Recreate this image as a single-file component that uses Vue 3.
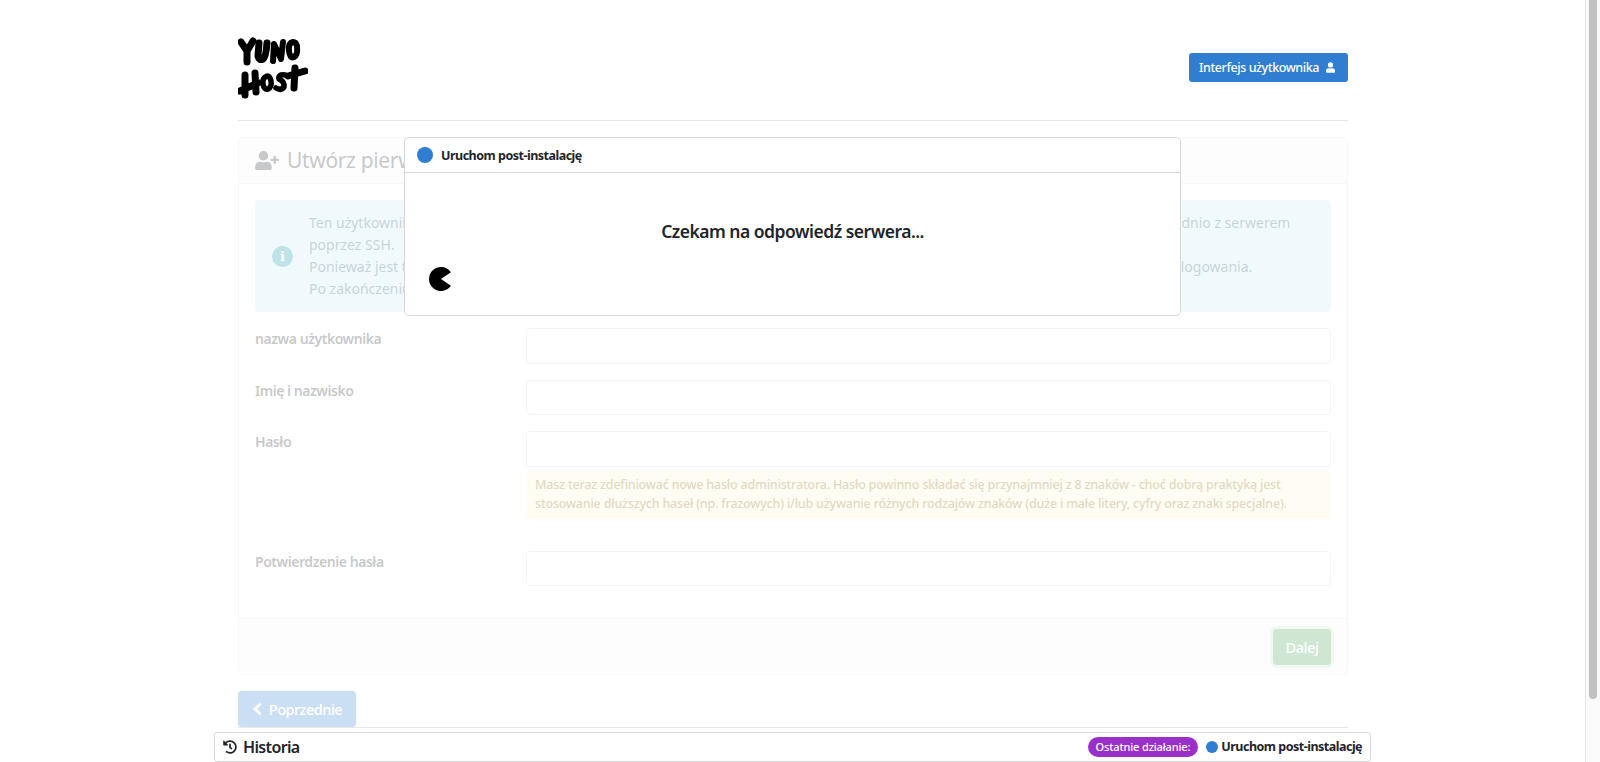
<script setup>
const hint = 'Masz teraz zdefiniować nowe hasło administratora. Hasło powinno składać się przynajmniej z 8 znaków - choć dobrą praktyką jest stosowanie dłuższych haseł (np. frazowych) i/lub używanie różnych rodzajów znaków (duże i małe litery, cyfry oraz znaki specjalne).'
</script>

<template>
  <div class="page">
    <div class="main">
      <header class="top">
        <svg class="logo" viewBox="0 0 70 62" fill="none" stroke="#000" stroke-width="7" stroke-linecap="round" stroke-linejoin="round">
          <path d="M3 5 L9 14 L15 4 M9 14 L9 25" />
          <path d="M21 6 L20 19 Q21 24 25 22 Q28 20 29 6" />
          <path d="M35 24 L36 7 L43 22 L45 5" stroke-width="6" />
          <path d="M55 5 Q50 6 51 14 Q52 22 56 20 Q60 18 59 9 Q58 5 55 5 Z" stroke-width="6" />
          <path d="M7 38 L7 58 M2 54 L20 46 M17 36 L18 55" />
          <path d="M29 39 Q24 41 25 47 Q26 53 30 52 Q34 50 33 44 Q32 39 29 39 Z" stroke-width="5.500" />
          <path d="M47 38 Q40 37 41 42 Q47 45 46 50 Q43 54 38 51" stroke-width="5.500" />
          <path d="M57 31 L56 51 M50 39 L67 34" />
        </svg>
        <a class="btn user-btn">Interfejs użytkownika
          <svg class="user-ico" viewBox="0 0 448 512" fill="#fff"><path d="M224 256a128 128 0 1 0 0-256 128 128 0 0 0 0 256zm89.6 32h-16.7a174 174 0 0 1-145.8 0h-16.7A134.4 134.4 0 0 0 0 422.4V464a48 48 0 0 0 48 48h352a48 48 0 0 0 48-48v-41.6A134.4 134.4 0 0 0 313.6 288z"/></svg>
        </a>
      </header>
      <hr class="rule" />

      <section class="card">
        <div class="card-head">
          <svg class="add-ico" viewBox="0 0 640 512" fill="#212529"><path d="M624 208h-64v-64c0-8.800-7.200-16-16-16h-32c-8.800 0-16 7.200-16 16v64h-64c-8.800 0-16 7.200-16 16v32c0 8.800 7.200 16 16 16h64v64c0 8.800 7.200 16 16 16h32c8.800 0 16-7.200 16-16v-64h64c8.800 0 16-7.200 16-16v-32c0-8.800-7.200-16-16-16zm-400 48a128 128 0 1 0 0-256 128 128 0 0 0 0 256zm89.600 32h-16.700a174 174 0 0 1-145.800 0h-16.700A134.400 134.400 0 0 0 0 422.400V464a48 48 0 0 0 48 48h352a48 48 0 0 0 48-48v-41.600A134.400 134.400 0 0 0 313.600 288z"/></svg>
          <h2>Utwórz pierwszego użytkownika</h2>
        </div>
        <div class="card-body">
          <div class="alert">
            <span class="info-ico">i</span>
            <p>Ten użytkownik otrzymuje uprawnienia administratora całego systemu i będzie mógł łączyć się z panelu webadmina a także bezpośrednio z serwerem<br />poprzez SSH.<br />Ponieważ jest to pierwszy użytkownik w tym nowym systemie, jego dane będą służyć również do pierwszego oraz każdego kolejnego logowania.<br />Po zakończeniu instalacji będzie można dodać kolejnych użytkowników.</p>
          </div>
          <div class="row"><label>nazwa użytkownika</label><div class="field"></div></div>
          <div class="row"><label>Imię i nazwisko</label><div class="field"></div></div>
          <div class="row"><label>Hasło</label>
            <div class="col"><div class="field"></div><div class="hint">{{ hint }}</div></div>
          </div>
          <div class="row last"><label>Potwierdzenie hasła</label><div class="field"></div></div>
        </div>
        <div class="card-foot"><button class="btn next">Dalej</button></div>
      </section>

      <button class="btn prev">
        <svg class="chev" viewBox="0 0 12 16" fill="none" stroke="#fff" stroke-width="3.200"><path d="M9.500 2 L3 8 L9.500 14" /></svg>
        Poprzednie
      </button>
      <hr class="rule end" />

      <div class="veil"></div>

      <div class="modal">
        <div class="modal-head"><span class="dot"></span><strong>Uruchom post-instalację</strong></div>
        <div class="modal-body">
          <h4>Czekam na odpowiedź serwera...</h4>
          <svg class="pac" viewBox="0 0 24 24"><path d="M21.900 5.200 A12 12 0 1 0 21.900 18.800 L12 12 Z" fill="#000" /></svg>
        </div>
      </div>

      <footer class="history">
        <span class="hist-title">
          <svg class="hist-ico" viewBox="0 0 512 512" fill="#212529"><path d="M504 255.500c.3 136.600-111.200 248.400-247.800 248.500a247 247 0 0 1-151.700-51.500c-10.700-8.100-11.700-23.900-2.200-33.400l11.300-11.300c8.100-8.100 21.100-9 30.100-2A183.600 183.600 0 0 0 256 440c101.700 0 184-82.300 184-184 0-101.700-82.300-184-184-184-48.800 0-93.100 19-126 49.900l50.700 50.700c10.100 10.100 2.900 27.300-11.300 27.300H24c-8.800 0-16-7.200-16-16V38.600c0-14.300 17.200-21.400 27.300-11.300l49.400 49.400A247.100 247.100 0 0 1 256 8c136.700 0 247.800 111 248 247.500zm-180.900 78.800 9.800-12.600c8.100-10.500 6.300-25.500-4.200-33.700L288 256.300V152c0-13.300-10.700-24-24-24h-16c-13.300 0-24 10.700-24 24v135.700l65.400 50.900c10.500 8.100 25.500 6.300 33.700-4.300z"/></svg>
          Historia
        </span>
        <span class="last-op">
          <span class="badge">Ostatnie działanie:</span>
          <span class="dot small"></span>
          <strong>Uruchom post-instalację</strong>
        </span>
      </footer>
    </div>
    <div class="rail"><div class="thumb"></div></div>
  </div>
</template>

<style>
html, body { margin: 0; height: 100%; overflow: hidden; background: #fff; }
</style>

<style scoped>
.page {
  display: flex;
  height: 762px;
  overflow: hidden;
  font-family: "Noto Sans", "Open Sans", sans-serif;
  color: #212529;
}
.main {
  position: relative;
  flex: 1;
  height: 762px;
  padding: 0 237px 0 238px;
  box-sizing: border-box;
  overflow: hidden;
}
.rail {
  width: 15px;
  box-sizing: border-box;
  border-left: 1px solid #e8e8e8;
  padding: 0 3px 0 3px;
  background: #fafafa;
}
.thumb { height: 699px; background: #c1c1c1; border-radius: 0 0 4px 4px; }

.top {
  height: 120px;
  display: flex;
  align-items: flex-start;
  justify-content: space-between;
  box-sizing: border-box;
}
.logo { width: 70px; height: 62px; margin-top: 37px; }
.btn { border: 0; color: #fff; font-family: inherit; box-sizing: border-box; }
.user-btn {
  margin-top: 53px;
  width: 159px;
  height: 29px;
  background: #2f7ed2;
  border-radius: 3px;
  font-size: 12.500px;
  font-weight: 500;
  letter-spacing: -.42px;
  display: flex;
  align-items: center;
  padding-left: 10px;
  white-space: nowrap;
}
.user-ico { width: 9px; height: 11px; margin-left: 7px; }
.rule { margin: 0; border: 0; border-top: 1px solid #e4e7ea; height: 0; }

.card {
  margin-top: 16px;
  border: 1px solid #dfdfdf;
  border-radius: 5px;
}
.card-head {
  height: 46px;
  box-sizing: border-box;
  background: #f7f7f7;
  border-bottom: 1px solid #dfdfdf;
  display: flex;
  align-items: center;
  padding-left: 16px;
  border-radius: 5px 5px 0 0;
}
.add-ico { width: 24px; height: 19px; margin-right: 8px; }
h2 { margin: 0; font-size: 21px; font-weight: 400; line-height: 1; letter-spacing: -.35px; color: #212529; white-space: nowrap; }
.card-body { padding: 16px 16px 0; height: 434px; box-sizing: border-box; }
.alert {
  height: 112px;
  background: #c3ebf7;
  border-radius: 4px;
  display: flex;
  align-items: center;
  color: #1f4f58;
  box-sizing: border-box;
  padding-left: 17px;
}
.info-ico {
  width: 21px;
  height: 21px;
  flex: none;
  border-radius: 50%;
  background: #0090a8;
  color: #fff;
  font-family: "DejaVu Serif", serif;
  font-size: 13px;
  font-weight: 700;
  line-height: 21px;
  text-align: center;
  margin-right: 16px;
}
.alert p { margin: 0; font-size: 14px; line-height: 21.800px; white-space: nowrap; }
.row { display: flex; margin-top: 16px; align-items: flex-start; }
.row.last { margin-top: 31.500px; }
label {
  width: 271px;
  flex: none;
  font-size: 14px;
  font-weight: 600;
  letter-spacing: -.45px;
  line-height: 21px;
}
.col { flex: 1; min-width: 0; }
.field {
  flex: 1;
  height: 35.500px;
  box-sizing: border-box;
  border: 1px solid #ced4da;
  border-radius: 4px;
  background: #fff;
}
.hint {
  margin-top: 4.500px;
  height: 48px;
  box-sizing: border-box;
  background: #fff3cd;
  border-radius: 4px;
  color: #856404;
  font-size: 12.500px;
  font-weight: 500;
  letter-spacing: -.2px;
  line-height: 18.500px;
  padding: 5px 9px;
}
.card-foot {
  height: 56px;
  box-sizing: border-box;
  background: #f7f7f7;
  border-top: 1px solid #dfdfdf;
  display: flex;
  align-items: center;
  justify-content: flex-end;
  padding-right: 16px;
  border-radius: 0 0 5px 5px;
}
.next {
  width: 58px;
  height: 36px;
  background: #3c9a4c;
  border-radius: 4px;
  font-size: 14.500px;
  font-weight: 500;
  letter-spacing: -.45px;
  box-shadow: 0 0 0 3px #c3e3c8;
}
.prev {
  display: flex;
  align-items: center;
  justify-content: center;
  margin-top: 16px;
  width: 118px;
  height: 36px;
  background: #2f7ed2;
  border-radius: 4px;
  font-size: 14.500px;
  font-weight: 500;
  letter-spacing: -.5px;
}
.chev { width: 11px; height: 14px; margin-right: 6px; }

.veil {
  position: absolute;
  left: 0;
  right: 0;
  top: 121px;
  height: 606px;
  background: rgba(255, 255, 255, .75);
}

.modal {
  position: absolute;
  left: 404px;
  top: 137px;
  width: 777px;
  height: 179px;
  box-sizing: border-box;
  background: #fff;
  border: 1px solid #d9d9d9;
  border-radius: 5px;
}
.modal-head {
  height: 35px;
  box-sizing: border-box;
  border-bottom: 1px solid #d9d9d9;
  display: flex;
  align-items: center;
  padding-left: 12px;
  font-size: 12.500px;
}
.modal-head strong { margin-left: 8px; font-weight: 700; letter-spacing: -.5px; }
.dot { width: 16px; height: 16px; flex: none; border-radius: 50%; background: #2f7ed2; }
.dot.small { width: 12px; height: 12px; }
.modal-body { position: relative; }
h4 {
  margin: 0;
  padding-top: 46px;
  text-align: center;
  font-size: 17.500px;
  font-weight: 600;
  letter-spacing: -.5px;
  line-height: 24px;
  color: #212529;
}
.pac { position: absolute; left: 24px; top: 94px; width: 24px; height: 24px; }

.history {
  position: absolute;
  left: 214px;
  top: 732px;
  width: 1157px;
  height: 30px;
  box-sizing: border-box;
  background: #fff;
  border: 1px solid #d9d9d9;
  border-radius: 3px;
  display: flex;
  align-items: center;
  justify-content: space-between;
  padding: 0 8px 1px;
}
.hist-title { display: flex; align-items: center; font-size: 16px; font-weight: 600; letter-spacing: -.65px; }
.hist-ico { width: 14px; height: 14px; margin-right: 6px; }
.last-op { display: flex; align-items: center; font-size: 12.500px; }
.last-op strong { font-weight: 700; letter-spacing: -.5px; margin-left: 3px; }
.badge {
  background: #9b2fc9;
  color: #fff;
  font-size: 11px;
  font-weight: 500;
  letter-spacing: -.15px;
  border-radius: 10px;
  padding: 0 8px;
  height: 20px;
  line-height: 20px;
  margin-right: 8px;
}
</style>
